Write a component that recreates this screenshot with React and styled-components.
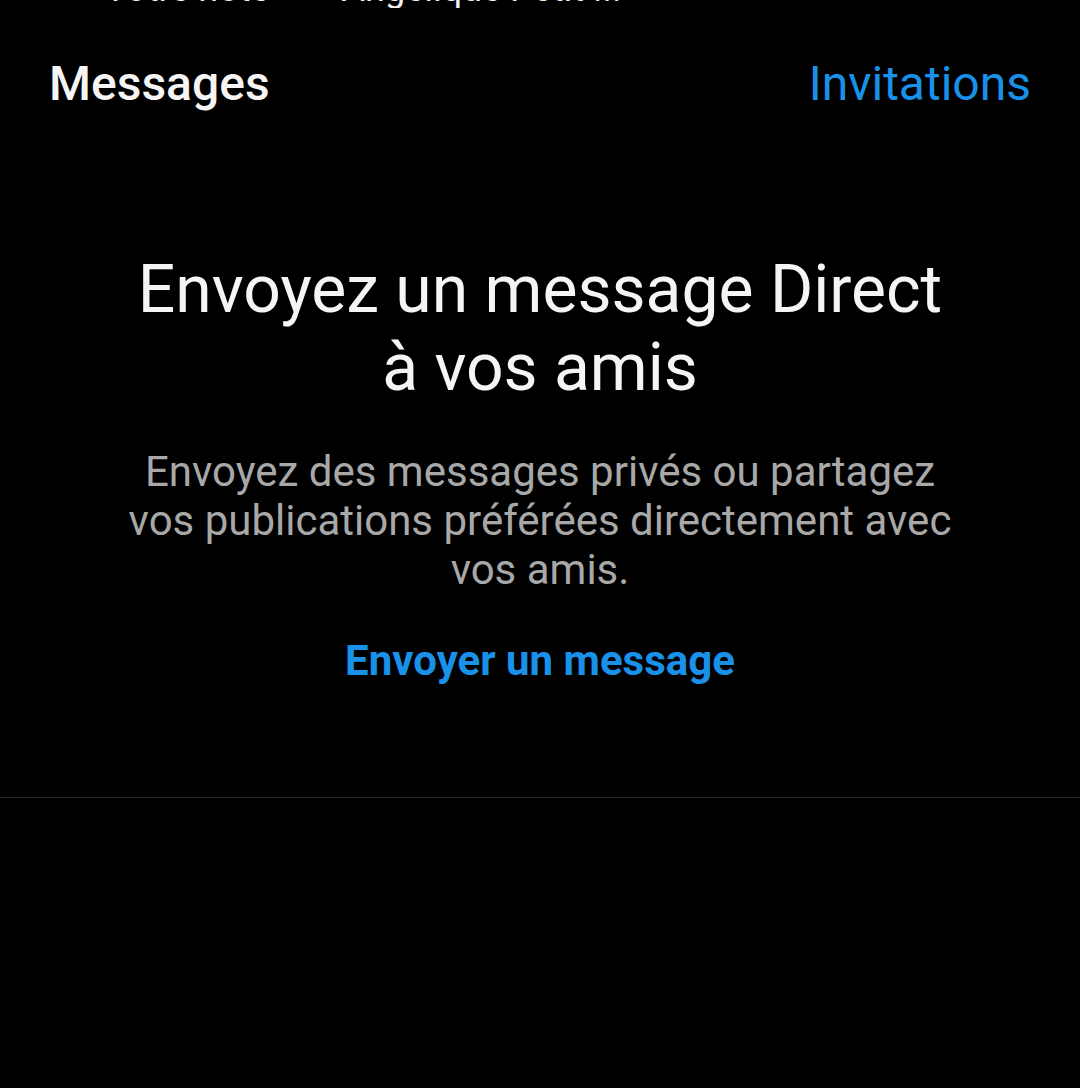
import React from 'react';
import styled, { createGlobalStyle } from 'styled-components';

const GlobalStyle = createGlobalStyle`
  html, body {
    margin: 0;
    padding: 0;
    background: #000000;
  }
  body {
    font-family: Roboto, "Noto Sans", sans-serif;
    -webkit-font-smoothing: antialiased;
  }
`;

const Screen = styled.div`
  width: 1080px;
  height: 1088px;
  background: #000000;
  overflow: hidden;
  display: flex;
  flex-direction: column;
`;

// notes strip scrolled mostly out of view, only the bottom of the labels shows
const NotesRow = styled.div`
  display: flex;
  height: 8px;
  overflow: hidden;
  padding-left: 104px;
  gap: 72px;

  span {
    display: block;
    margin-top: -31px;
    font-size: 36px;
    line-height: 40px;
    color: #f2f2f2;
    white-space: nowrap;
  }
`;

const Header = styled.div`
  display: flex;
  justify-content: space-between;
  align-items: center;
  padding: 43px 49px 0 49px;
  height: 64px;
`;

const Title = styled.h1`
  margin: 0;
  font-size: 48px;
  font-weight: 500;
  color: #f5f5f5;
`;

const Link = styled.a`
  font-size: ${(p) => p.$size || 48}px;
  font-weight: ${(p) => p.$weight || 400};
  color: #1a91e8;
  text-decoration: none;
  cursor: pointer;
`;

const Empty = styled.section`
  display: flex;
  flex-direction: column;
  align-items: center;
  text-align: center;
  padding: 136px 120px 0;
  height: 683px;
  box-sizing: border-box;
  border-bottom: 1px solid #262626;
`;

const Heading = styled.h2`
  margin: 0;
  font-size: 66px;
  line-height: 78px;
  font-weight: 400;
  color: #f5f5f5;
`;

const Body = styled.p`
  margin: 40px 0 42px;
  max-width: 840px;
  font-size: 42px;
  line-height: 49px;
  color: #a8a8a8;
`;

const App = () => (
  <>
    <GlobalStyle />
    <Screen>
      <NotesRow>
        <span>Votre note</span>
        <span>Angélique Petit ...</span>
      </NotesRow>
      <Header>
        <Title>Messages</Title>
        <Link>Invitations</Link>
      </Header>
      <Empty>
        <Heading>
          Envoyez un message Direct
          <br />à vos amis
        </Heading>
        <Body>
          Envoyez des messages privés ou partagez vos publications préférées
          directement avec vos amis.
        </Body>
        <Link $size={42} $weight={700}>
          Envoyer un message
        </Link>
      </Empty>
    </Screen>
  </>
);

export default App;
